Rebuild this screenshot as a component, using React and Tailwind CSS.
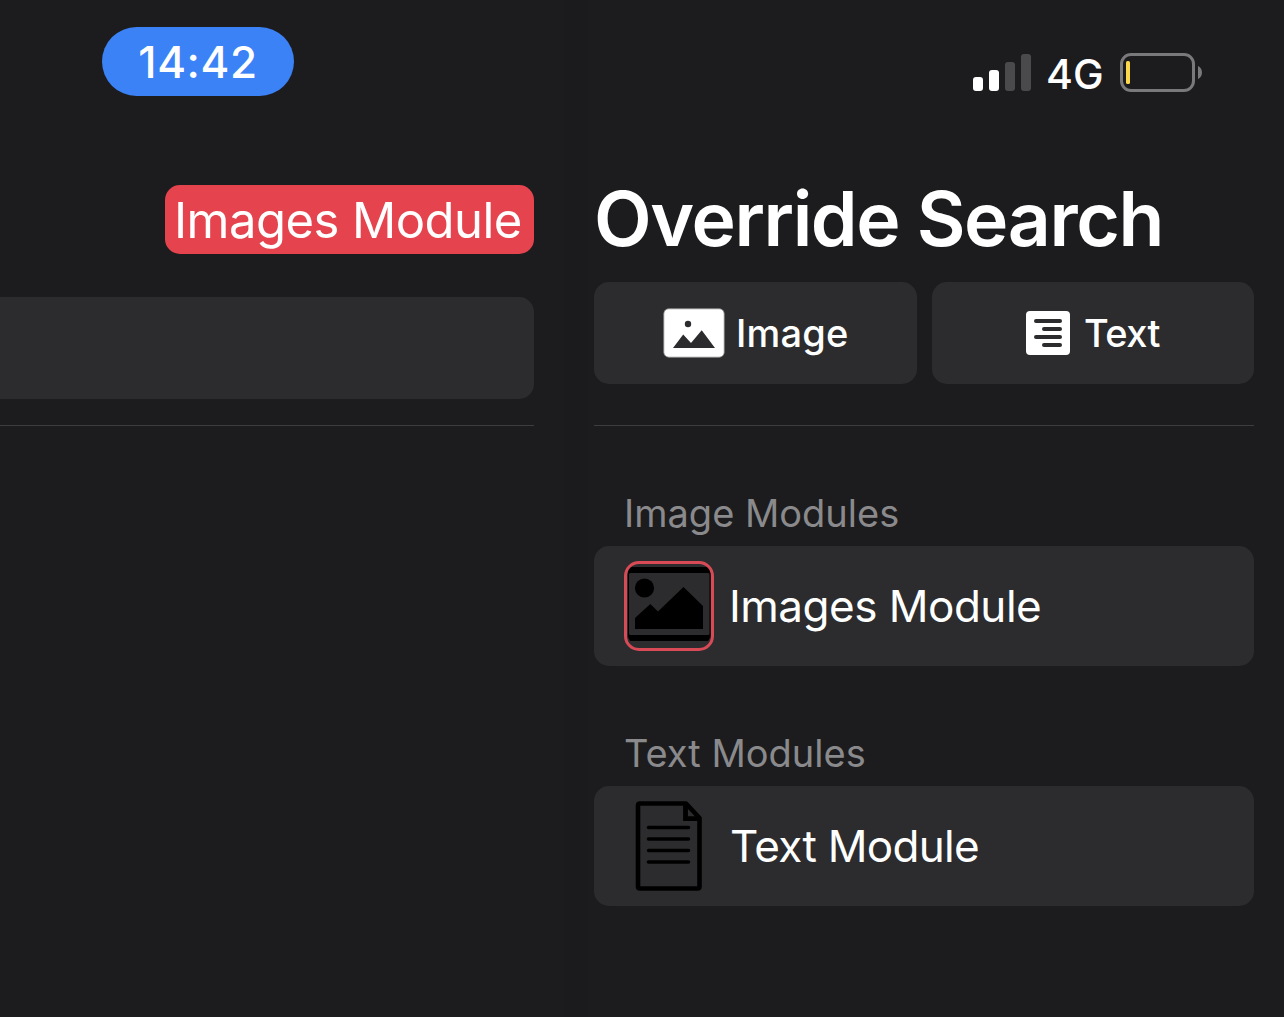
function SignalBars() {
  return (
    <div className="flex items-end gap-[6px]">
      <div className="h-[14px] w-[10px] rounded-[3px] bg-white" />
      <div className="h-[21px] w-[10px] rounded-[3px] bg-white" />
      <div className="h-[29px] w-[10px] rounded-[3px] bg-[#4a4a4c]" />
      <div className="h-[37px] w-[10px] rounded-[3px] bg-[#4a4a4c]" />
    </div>
  );
}

function Battery() {
  return (
    <div className="flex items-center">
      <div className="flex h-[39px] w-[75px] items-center rounded-[11px] border-[3px] border-[#79797b] pl-[3px]">
        <div className="h-[23px] w-[4px] rounded-[1.5px] bg-[#fdd84c]" />
      </div>
      <svg className="ml-[3px]" width="4" height="13" viewBox="0 0 4 13">
        <path d="M0 0C2.4 1 4 3.5 4 6.5C4 9.5 2.4 12 0 13Z" fill="#79797b" />
      </svg>
    </div>
  );
}

function ImageIcon() {
  return (
    <svg width="62" height="50" viewBox="0 0 62 50">
      <rect x="0.8" y="0.8" width="60.4" height="48.4" rx="5" fill="#fff" stroke="#8b8b8c" strokeWidth="0.8" />
      <circle cx="25" cy="16" r="3.2" fill="#2c2c2e" />
      <path d="M10 40L20.2 26.6L28 35L38.7 22.2L52 40Z" fill="#2c2c2e" />
    </svg>
  );
}

function TextIcon() {
  return (
    <svg width="44" height="44" viewBox="0 0 44 44">
      <rect width="44" height="44" rx="4" fill="#fff" />
      <path d="M10 10H34M18 18H34M10 26H34M18 34H34" stroke="#2c2c2e" strokeWidth="4" strokeLinecap="round" />
    </svg>
  );
}

function PictureIcon() {
  return (
    <svg width="90" height="90" viewBox="0 0 90 90">
      <path d="M5.5 6H84.5L86.5 10V76L84 80H6L4 76V10Z" fill="#000" />
      <rect x="5" y="12" width="80.5" height="62" rx="1.5" fill="#2c2c2e" />
      <circle cx="20.5" cy="27" r="9.6" fill="#000" />
      <path d="M11 68V57L26.3 43L34 50.5L59.5 26L79 45V68Z" fill="#000" />
      <rect x="1.5" y="1.5" width="87" height="87" rx="13.5" fill="none" stroke="#d94a57" strokeWidth="3" />
    </svg>
  );
}

function DocumentIcon() {
  return (
    <svg width="90" height="90" viewBox="0 0 90 90">
      <path
        d="M16 2.5H62L75.5 17V85.5Q75.5 87.5 73.5 87.5H16Q14 87.5 14 85.5V4.5Q14 2.5 16 2.5Z"
        fill="none"
        stroke="#000"
        strokeWidth="4.6"
        strokeLinejoin="round"
      />
      <path d="M61.5 3V17.7H75" fill="none" stroke="#000" strokeWidth="4.8" />
      <path d="M24.5 26.5H64.5M24.5 38H64.5M24.5 49.5H64.5M24.5 61H64.5" stroke="#000" strokeWidth="3.6" strokeLinecap="round" />
    </svg>
  );
}

function ModuleSection({ title, children }) {
  return (
    <section className="flex flex-col">
      <h2 className="flex h-[64px] items-center pb-[2px] pl-[30px] text-[38px] leading-none text-[#8a8a8c]">{title}</h2>
      <div className="flex h-[120px] items-center rounded-[15px] bg-[#2c2c2e] pl-[30px] text-[44px] leading-none">
        {children}
      </div>
    </section>
  );
}

export default function App() {
  return (
    <div className="flex h-[1017px] w-[1284px] overflow-hidden whitespace-nowrap bg-[#1c1c1e] font-['Inter',sans-serif] text-white">
      <div className="flex w-[564px] flex-col pr-[30px]">
        <div className="mt-[27px] ml-[102px] flex h-[69px] w-[192px] items-center justify-center rounded-full bg-[#3b82f6]">
          <span className="text-[44px] leading-none font-medium tracking-[0.6px]">14:42</span>
        </div>
        <div className="mt-[89px] ml-auto flex h-[69px] w-[369px] items-center rounded-[15px] bg-[#e5444f] pt-[2px] pl-[9px]">
          <span className="text-[49px] leading-none tracking-[-0.55px]">Images Module</span>
        </div>
        <div className="mt-[43px] h-[102px] rounded-r-[15px] bg-[#2c2c2e]" />
        <div className="mt-[26px] h-px bg-[#3d3d40]" />
      </div>
      <div className="w-[24px] bg-[#1b1b1d]" />
      <div className="flex w-[696px] flex-col pr-[30px] pl-[6px]">
        <div className="mt-[53px] ml-[379px] flex h-[39px] items-center">
          <SignalBars />
          <span className="ml-[15px] w-[74px] pt-[4px] text-[41px] leading-none font-medium">4G</span>
          <Battery />
        </div>
        <h1 className="mt-[80px] flex h-[94px] items-center pb-[1px] text-[75px] leading-none font-semibold tracking-[-1.4px]">Override Search</h1>
        <div className="mt-[16px] flex gap-[15px]">
          <div className="flex h-[102px] w-[323px] items-center rounded-[15px] bg-[#2c2c2e] pl-[69px]">
            <ImageIcon />
            <span className="ml-[11px] text-[38px] leading-none font-medium tracking-[0.2px]">Image</span>
          </div>
          <div className="flex h-[102px] w-[322px] items-center rounded-[15px] bg-[#2c2c2e] pl-[94px]">
            <TextIcon />
            <span className="ml-[14px] text-[38px] leading-none font-medium tracking-[-0.6px]">Text</span>
          </div>
        </div>
        <div className="mt-[41px] h-px bg-[#3d3d40]" />
        <div className="mt-[56px] flex flex-col gap-[56px]">
          <ModuleSection title="Image Modules">
            <PictureIcon />
            <span className="ml-[15px] tracking-[-0.5px]">Images Module</span>
          </ModuleSection>
          <ModuleSection title="Text Modules">
            <DocumentIcon />
            <span className="ml-[16px] tracking-[-0.7px]">Text Module</span>
          </ModuleSection>
        </div>
      </div>
    </div>
  );
}
